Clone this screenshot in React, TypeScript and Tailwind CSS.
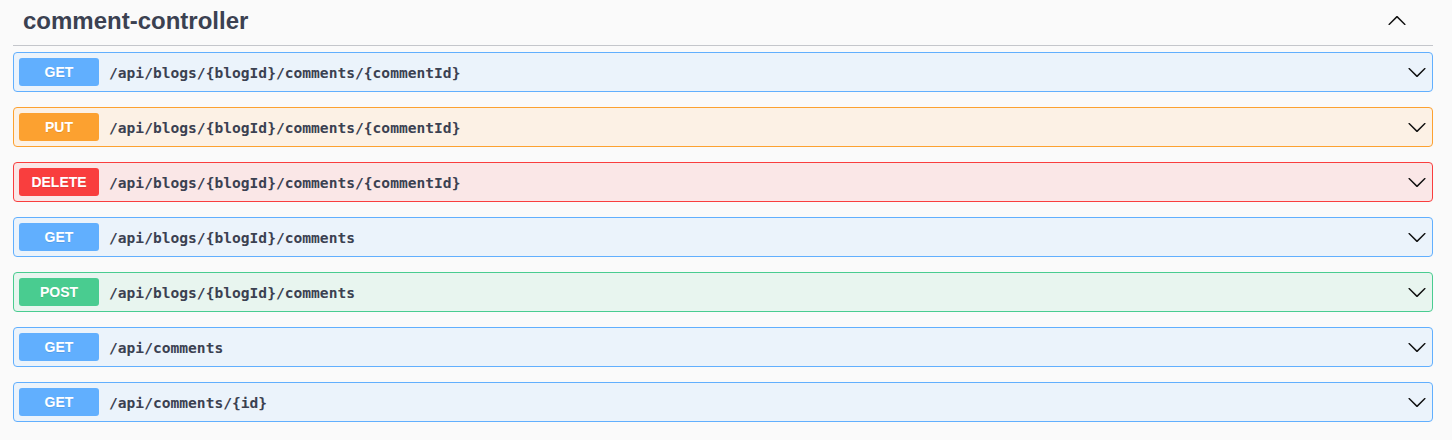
import React from 'react';

interface Op {
  method: 'GET' | 'PUT' | 'DELETE' | 'POST';
  path: string;
}

const ops: Op[] = [
  { method: 'GET', path: '/api/blogs/{blogId}/comments/{commentId}' },
  { method: 'PUT', path: '/api/blogs/{blogId}/comments/{commentId}' },
  { method: 'DELETE', path: '/api/blogs/{blogId}/comments/{commentId}' },
  { method: 'GET', path: '/api/blogs/{blogId}/comments' },
  { method: 'POST', path: '/api/blogs/{blogId}/comments' },
  { method: 'GET', path: '/api/comments' },
  { method: 'GET', path: '/api/comments/{id}' },
];

const styles: Record<Op['method'], { row: string; badge: string }> = {
  GET: { row: 'border-[#61affe] bg-[#ebf3fb]', badge: 'bg-[#61affe]' },
  PUT: { row: 'border-[#fca130] bg-[#fcf1e5]', badge: 'bg-[#fca130]' },
  DELETE: { row: 'border-[#f93e3e] bg-[#fae7e7]', badge: 'bg-[#f93e3e]' },
  POST: { row: 'border-[#49cc90] bg-[#e8f5ef]', badge: 'bg-[#49cc90]' },
};

const ChevronDown = () => (
  <svg width="20" height="20" viewBox="0 0 20 20" className="shrink-0 fill-[#111]">
    <path d="M17.418 6.109c.272-.268.709-.268.979 0s.271.701 0 .969l-7.908 7.83c-.27.268-.707.268-.979 0l-7.908-7.83c-.27-.268-.27-.701 0-.969.271-.268.709-.268.979 0L10 13.25l7.418-7.141z" />
  </svg>
);

const ChevronUp = () => (
  <svg width="20" height="20" viewBox="0 0 20 20" className="shrink-0 fill-[#111]">
    <path d="M17.418 14.908c.272.268.709.268.979 0s.271-.701 0-.969l-7.908-7.83c-.27-.268-.707-.268-.979 0l-7.908 7.83c-.27.268-.27.701 0 .969.271.268.709.268.979 0L10 7.767l7.418 7.141z" />
  </svg>
);

export default function App() {
  return (
    <div className="min-h-[440px] bg-[#fafafa] pl-[13px] pr-[19px]" style={{ fontFamily: '"Liberation Sans", Arial, sans-serif' }}>
      {/* tag header */}
      <div className="flex h-[46px] items-center justify-between border-b border-[#c4c6cb] pl-[10px] pr-[26px] mb-[6px]">
        <h3 className="text-[24px] font-bold text-[#3b4151] leading-none pb-[4px]">comment-controller</h3>
        <div className="pb-[6px]">
          <ChevronUp />
        </div>
      </div>

      {ops.map((op, i) => (
        <div
          key={i}
          className={`flex h-[40px] items-center rounded-[4px] border p-[5px] mb-[15px] ${styles[op.method].row}`}
        >
          <span
            className={`flex h-[28px] w-[80px] items-center justify-center rounded-[3px] text-[14px] font-bold text-white [text-shadow:0_1px_0_rgba(0,0,0,0.1)] ${styles[op.method].badge}`}
          >
            {op.method}
          </span>
          <span
            className="flex-1 px-[10px] pt-[1px] text-[14.6px] font-bold text-[#3b4151]"
            style={{ fontFamily: '"DejaVu Sans Mono", monospace' }}
          >
            {op.path}
          </span>
          <ChevronDown />
        </div>
      ))}
    </div>
  );
}
